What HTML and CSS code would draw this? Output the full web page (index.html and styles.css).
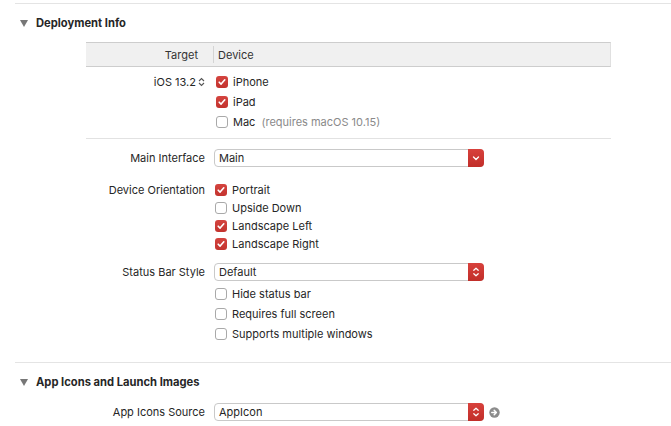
FILE: index.html
```html
<!DOCTYPE html>
<html>
<head>
<meta charset="utf-8">
<link rel="stylesheet" href="styles.css">
</head>
<body>
<div class="page">
  <div class="rule"></div>
  <div class="sec-head"><span class="tri"></span><span>Deployment Info</span></div>
  <div class="table">
    <div class="thead">
      <div class="th-target">Target</div>
      <div class="th-sep"></div>
      <div class="th-device">Device</div>
    </div>
    <div class="tbody">
      <div class="trow">
        <div class="tlabel">iOS 13.2<svg class="updown" width="7" height="10" viewBox="0 0 7 10"><path d="M1 4 L3.5 1.5 L6 4 M1 6 L3.5 8.5 L6 6" fill="none" stroke="#555" stroke-width="1.1"/></svg></div>
        <label class="cb"><span class="box on"><svg width="12" height="12" viewBox="0 0 12 12"><path d="M3.2 6.2 L5.1 8.1 L8.8 3.8" fill="none" stroke="#fff" stroke-width="1.6" stroke-linecap="round" stroke-linejoin="round"/></svg></span>iPhone</label>
      </div>
      <div class="trow">
        <div class="tlabel"></div>
        <label class="cb"><span class="box on"><svg width="12" height="12" viewBox="0 0 12 12"><path d="M3.2 6.2 L5.1 8.1 L8.8 3.8" fill="none" stroke="#fff" stroke-width="1.6" stroke-linecap="round" stroke-linejoin="round"/></svg></span>iPad</label>
      </div>
      <div class="trow">
        <div class="tlabel"></div>
        <label class="cb"><span class="box"></span>Mac<span class="note">(requires macOS 10.15)</span></label>
      </div>
    </div>
  </div>

  <div class="form">
    <div class="row r-main">
      <div class="label">Main Interface</div>
      <div class="popup"><span class="ptext">Main</span><span class="pbtn"><svg width="16" height="18" viewBox="0 0 16 18"><path d="M5.5 8 L8 10.5 L10.5 8" fill="none" stroke="#fff" stroke-width="1.4" stroke-linecap="round" stroke-linejoin="round"/></svg></span></div>
    </div>

    <div class="group g-orient">
      <div class="crow">
        <div class="label">Device Orientation</div>
        <label class="cb"><span class="box on"><svg width="12" height="12" viewBox="0 0 12 12"><path d="M3.2 6.2 L5.1 8.1 L8.8 3.8" fill="none" stroke="#fff" stroke-width="1.6" stroke-linecap="round" stroke-linejoin="round"/></svg></span>Portrait</label>
      </div>
      <div class="crow">
        <div class="label"></div>
        <label class="cb"><span class="box"></span>Upside Down</label>
      </div>
      <div class="crow">
        <div class="label"></div>
        <label class="cb"><span class="box on"><svg width="12" height="12" viewBox="0 0 12 12"><path d="M3.2 6.2 L5.1 8.1 L8.8 3.8" fill="none" stroke="#fff" stroke-width="1.6" stroke-linecap="round" stroke-linejoin="round"/></svg></span>Landscape Left</label>
      </div>
      <div class="crow">
        <div class="label"></div>
        <label class="cb"><span class="box on"><svg width="12" height="12" viewBox="0 0 12 12"><path d="M3.2 6.2 L5.1 8.1 L8.8 3.8" fill="none" stroke="#fff" stroke-width="1.6" stroke-linecap="round" stroke-linejoin="round"/></svg></span>Landscape Right</label>
      </div>
    </div>

    <div class="row r-status">
      <div class="label">Status Bar Style</div>
      <div class="popup"><span class="ptext">Default</span><span class="pbtn"><svg width="16" height="18" viewBox="0 0 16 18"><path d="M5.8 7.3 L8 5.2 L10.2 7.3 M5.8 10.7 L8 12.8 L10.2 10.7" fill="none" stroke="#fff" stroke-width="1.2" stroke-linecap="round" stroke-linejoin="round"/></svg></span></div>
    </div>
    <div class="group g-status">
      <div class="srow"><div class="label"></div><label class="cb"><span class="box"></span>Hide status bar</label></div>
      <div class="srow"><div class="label"></div><label class="cb"><span class="box"></span>Requires full screen</label></div>
      <div class="srow"><div class="label"></div><label class="cb"><span class="box"></span>Supports multiple windows</label></div>
    </div>
  </div>

  <div class="rule rule2"></div>
  <div class="sec-head"><span class="tri"></span><span>App Icons and Launch Images</span></div>
  <div class="form">
    <div class="row r-icons">
      <div class="label">App Icons Source</div>
      <div class="popup"><span class="ptext">AppIcon</span><span class="pbtn"><svg width="16" height="18" viewBox="0 0 16 18"><path d="M5.8 7.3 L8 5.2 L10.2 7.3 M5.8 10.7 L8 12.8 L10.2 10.7" fill="none" stroke="#fff" stroke-width="1.2" stroke-linecap="round" stroke-linejoin="round"/></svg></span></div>
      <svg class="goto" width="11" height="11" viewBox="0 0 11 11"><circle cx="5.5" cy="5.5" r="5.2" fill="#8c8c8c"/><path d="M2.8 5.5 H7.2 M5.2 3.3 L7.4 5.5 L5.2 7.7" fill="none" stroke="#fff" stroke-width="1.5" stroke-linecap="round" stroke-linejoin="round"/></svg>
    </div>
  </div>
</div>
</body>
</html>
```

FILE: styles.css
```css
* { box-sizing: border-box; }
html, body { margin: 0; padding: 0; background: #fff; }
body {
  font-family: Inter, "Liberation Sans", Arial, sans-serif;
  font-size: 11px;
  color: #262626;
  width: 671px;
  height: 426px;
  overflow: hidden;
}
.page { padding-left: 15px; padding-top: 3px; }
.rule { height: 1px; background: #e4e4e4; }
.rule2 { margin-top: 18px; }

.sec-head {
  height: 37px;
  display: flex;
  align-items: center;
  font-weight: 700;
  font-size: 11.2px;
  color: #262626;
  padding-left: 5px;
}
.tri {
  width: 0; height: 0;
  border-left: 4px solid transparent;
  border-right: 4px solid transparent;
  border-top: 7px solid #777;
  margin-right: 8px;
  margin-top: 1px;
}

.table { margin-left: 71px; width: 525px; margin-top: 1px; border-bottom: 1px solid #e2e2e2; padding-bottom: 6px; }
.thead {
  height: 25px;
  background: #f0f0f0;
  border-top: 1px solid #cdcdcd;
  border-bottom: 1px solid #cdcdcd;
  border-right: 1px solid #e0e0e0;
  display: flex;
  align-items: center;
  color: #333;
}
.th-target { width: 127px; text-align: right; padding-right: 15px; }
.th-sep { width: 1px; height: 17px; background: #d4d4d4; }
.th-device { padding-left: 4px; }
.tbody { padding-top: 5px; }
.trow { height: 20px; display: flex; align-items: center; }
.tlabel { width: 119px; display: flex; justify-content: flex-end; align-items: center; margin-right: 10px; }
.updown { margin-left: 2px; }

.label { width: 190px; text-align: right; margin-right: 9px; flex-shrink: 0; }
.row { display: flex; align-items: center; height: 20px; }
.r-main { margin-top: 9px; }
.g-orient { margin-top: 13px; }
.crow { display: flex; align-items: center; height: 18px; }
.r-status { margin-top: 9px; }
.g-status { margin-top: 2px; }
.srow { display: flex; align-items: center; height: 20px; }
.r-icons { margin-top: 2px; }

.cb { display: flex; align-items: center; margin-left: 1px; }
.box {
  width: 12px; height: 12px;
  border: 1px solid #a9a9a9;
  border-radius: 3px;
  background: #fff;
  margin-right: 5px;
  display: inline-flex;
  flex-shrink: 0;
}
.box.on { border: none; background: linear-gradient(#d4443f, #c3332e); }
.box svg { display: block; }
.note { color: #8a8a8a; margin-left: 6px; }

.popup {
  width: 270px; height: 18px;
  border: 1px solid #c9c9c9;
  border-radius: 4px;
  background: #fff;
  display: flex;
  align-items: center;
}
.ptext { padding-left: 4px; flex: 1; }
.pbtn {
  width: 16px; height: 18px;
  margin: -1px -1px -1px 0;
  border-radius: 0 4px 4px 0;
  background: linear-gradient(#d8413c, #c12e29);
  display: flex;
}
.pbtn svg { display: block; }
.goto { margin-left: 5px; }
```
